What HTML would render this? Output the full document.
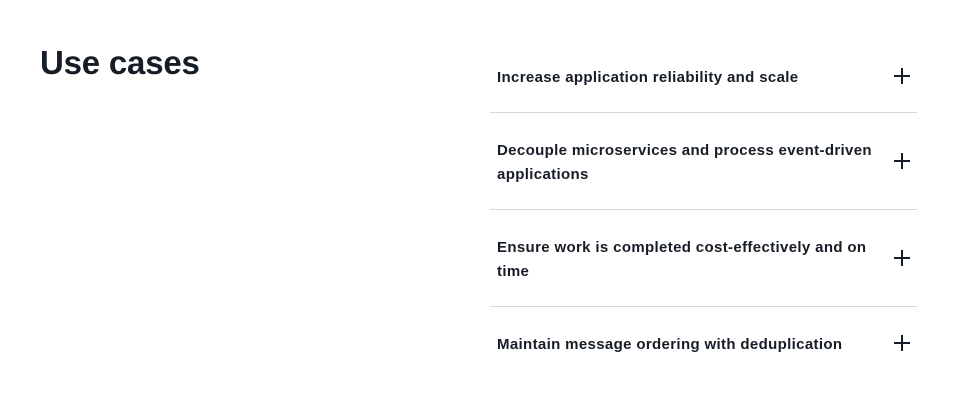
<!DOCTYPE html>
<html><head><style>
body{margin:0;width:958px;height:419px;background:#fff;font-family:"Liberation Sans",sans-serif;color:#161d26;position:relative;overflow:hidden}
h2{position:absolute;left:40px;top:43px;margin:0;font-size:33px;font-weight:bold;line-height:40px;letter-spacing:-0.2px}
.t{position:absolute;left:497px;width:385px;font-size:15px;font-weight:bold;line-height:24px;letter-spacing:0.35px}
.hr{position:absolute;left:490px;width:427px;height:1px;background:#d5d7da}
.p{position:absolute;left:894px;width:16px;height:16px}
.p:before{content:"";position:absolute;left:0;top:7px;width:16px;height:2px;background:#161d26}
.p:after{content:"";position:absolute;left:7px;top:0;width:2px;height:16px;background:#161d26}
</style></head><body>
<h2>Use cases</h2>
<div class="t" style="top:66px">Increase application reliability and scale</div>
<div class="p" style="top:68px"></div>
<div class="hr" style="top:112px"></div>
<div class="t" style="top:139px">Decouple microservices and process event-driven applications</div>
<div class="p" style="top:153px"></div>
<div class="hr" style="top:209px"></div>
<div class="t" style="top:236px">Ensure work is completed cost-effectively and on time</div>
<div class="p" style="top:250px"></div>
<div class="hr" style="top:306px"></div>
<div class="t" style="top:333px">Maintain message ordering with deduplication</div>
<div class="p" style="top:335px"></div>
</body></html>
